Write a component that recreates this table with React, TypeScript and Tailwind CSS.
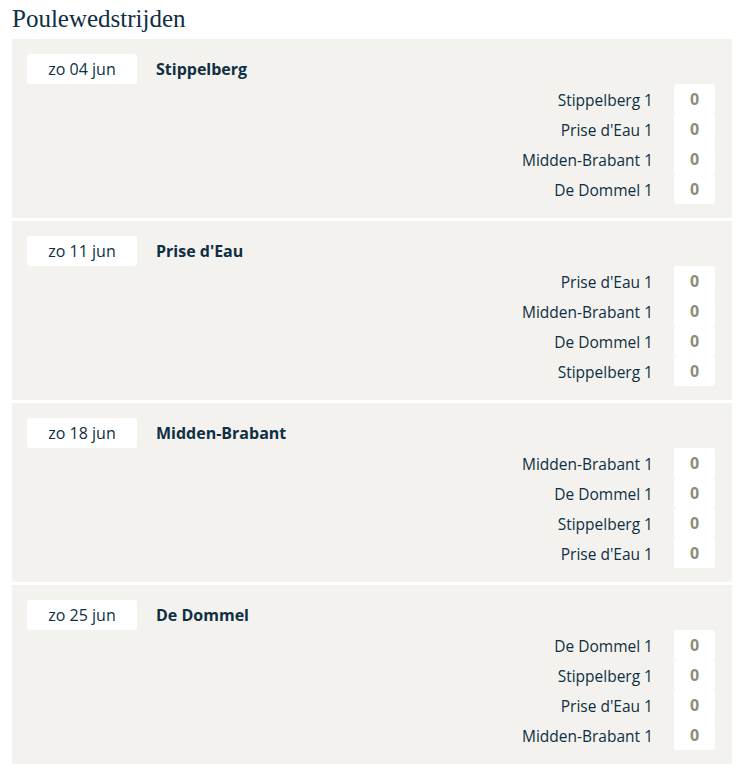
const matches = [
  { date: 'zo 04 jun', host: 'Stippelberg', teams: ['Stippelberg 1', "Prise d'Eau 1", 'Midden-Brabant 1', 'De Dommel 1'] },
  { date: 'zo 11 jun', host: "Prise d'Eau", teams: ["Prise d'Eau 1", 'Midden-Brabant 1', 'De Dommel 1', 'Stippelberg 1'] },
  { date: 'zo 18 jun', host: 'Midden-Brabant', teams: ['Midden-Brabant 1', 'De Dommel 1', 'Stippelberg 1', "Prise d'Eau 1"] },
  { date: 'zo 25 jun', host: 'De Dommel', teams: ['De Dommel 1', 'Stippelberg 1', "Prise d'Eau 1", 'Midden-Brabant 1'] },
];

export default function App() {
  return (
    <div className="min-h-[777px] w-[739px] bg-white text-[#0e2f44]" style={{ fontFamily: '"Open Sans", Lato, sans-serif' }}>
      <h2 className="pl-[12px] pt-[3px] text-[25px] leading-[32px]" style={{ fontFamily: '"Liberation Serif", serif' }}>
        Poulewedstrijden
      </h2>
      <div className="mx-[12px] mt-[4px] flex w-[720px] flex-col gap-[3px]">
        {matches.map((m) => (
          <div key={m.date} className="bg-[#f3f2ee] pb-[14px] pl-[15px] pr-[17px] pt-[15px]">
            <div className="flex items-center">
              <div className="flex h-[30px] w-[110px] items-center justify-center rounded-[3px] bg-white text-[16px]">
                {m.date}
              </div>
              <div className="ml-[19px] text-[16px] font-bold">{m.host}</div>
            </div>
            <div className="flex flex-col">
              {m.teams.map((team) => (
                <div key={team} className="flex h-[30px] items-center justify-end">
                  <span className="mr-[21px] pt-[2px] text-[15.5px] leading-[28px]">{team}</span>
                  <div className="flex h-[30px] w-[41px] items-center justify-center rounded-[3px] bg-white text-[16px] font-bold text-[#8e8c76]">
                    0
                  </div>
                </div>
              ))}
            </div>
          </div>
        ))}
      </div>
    </div>
  );
}
